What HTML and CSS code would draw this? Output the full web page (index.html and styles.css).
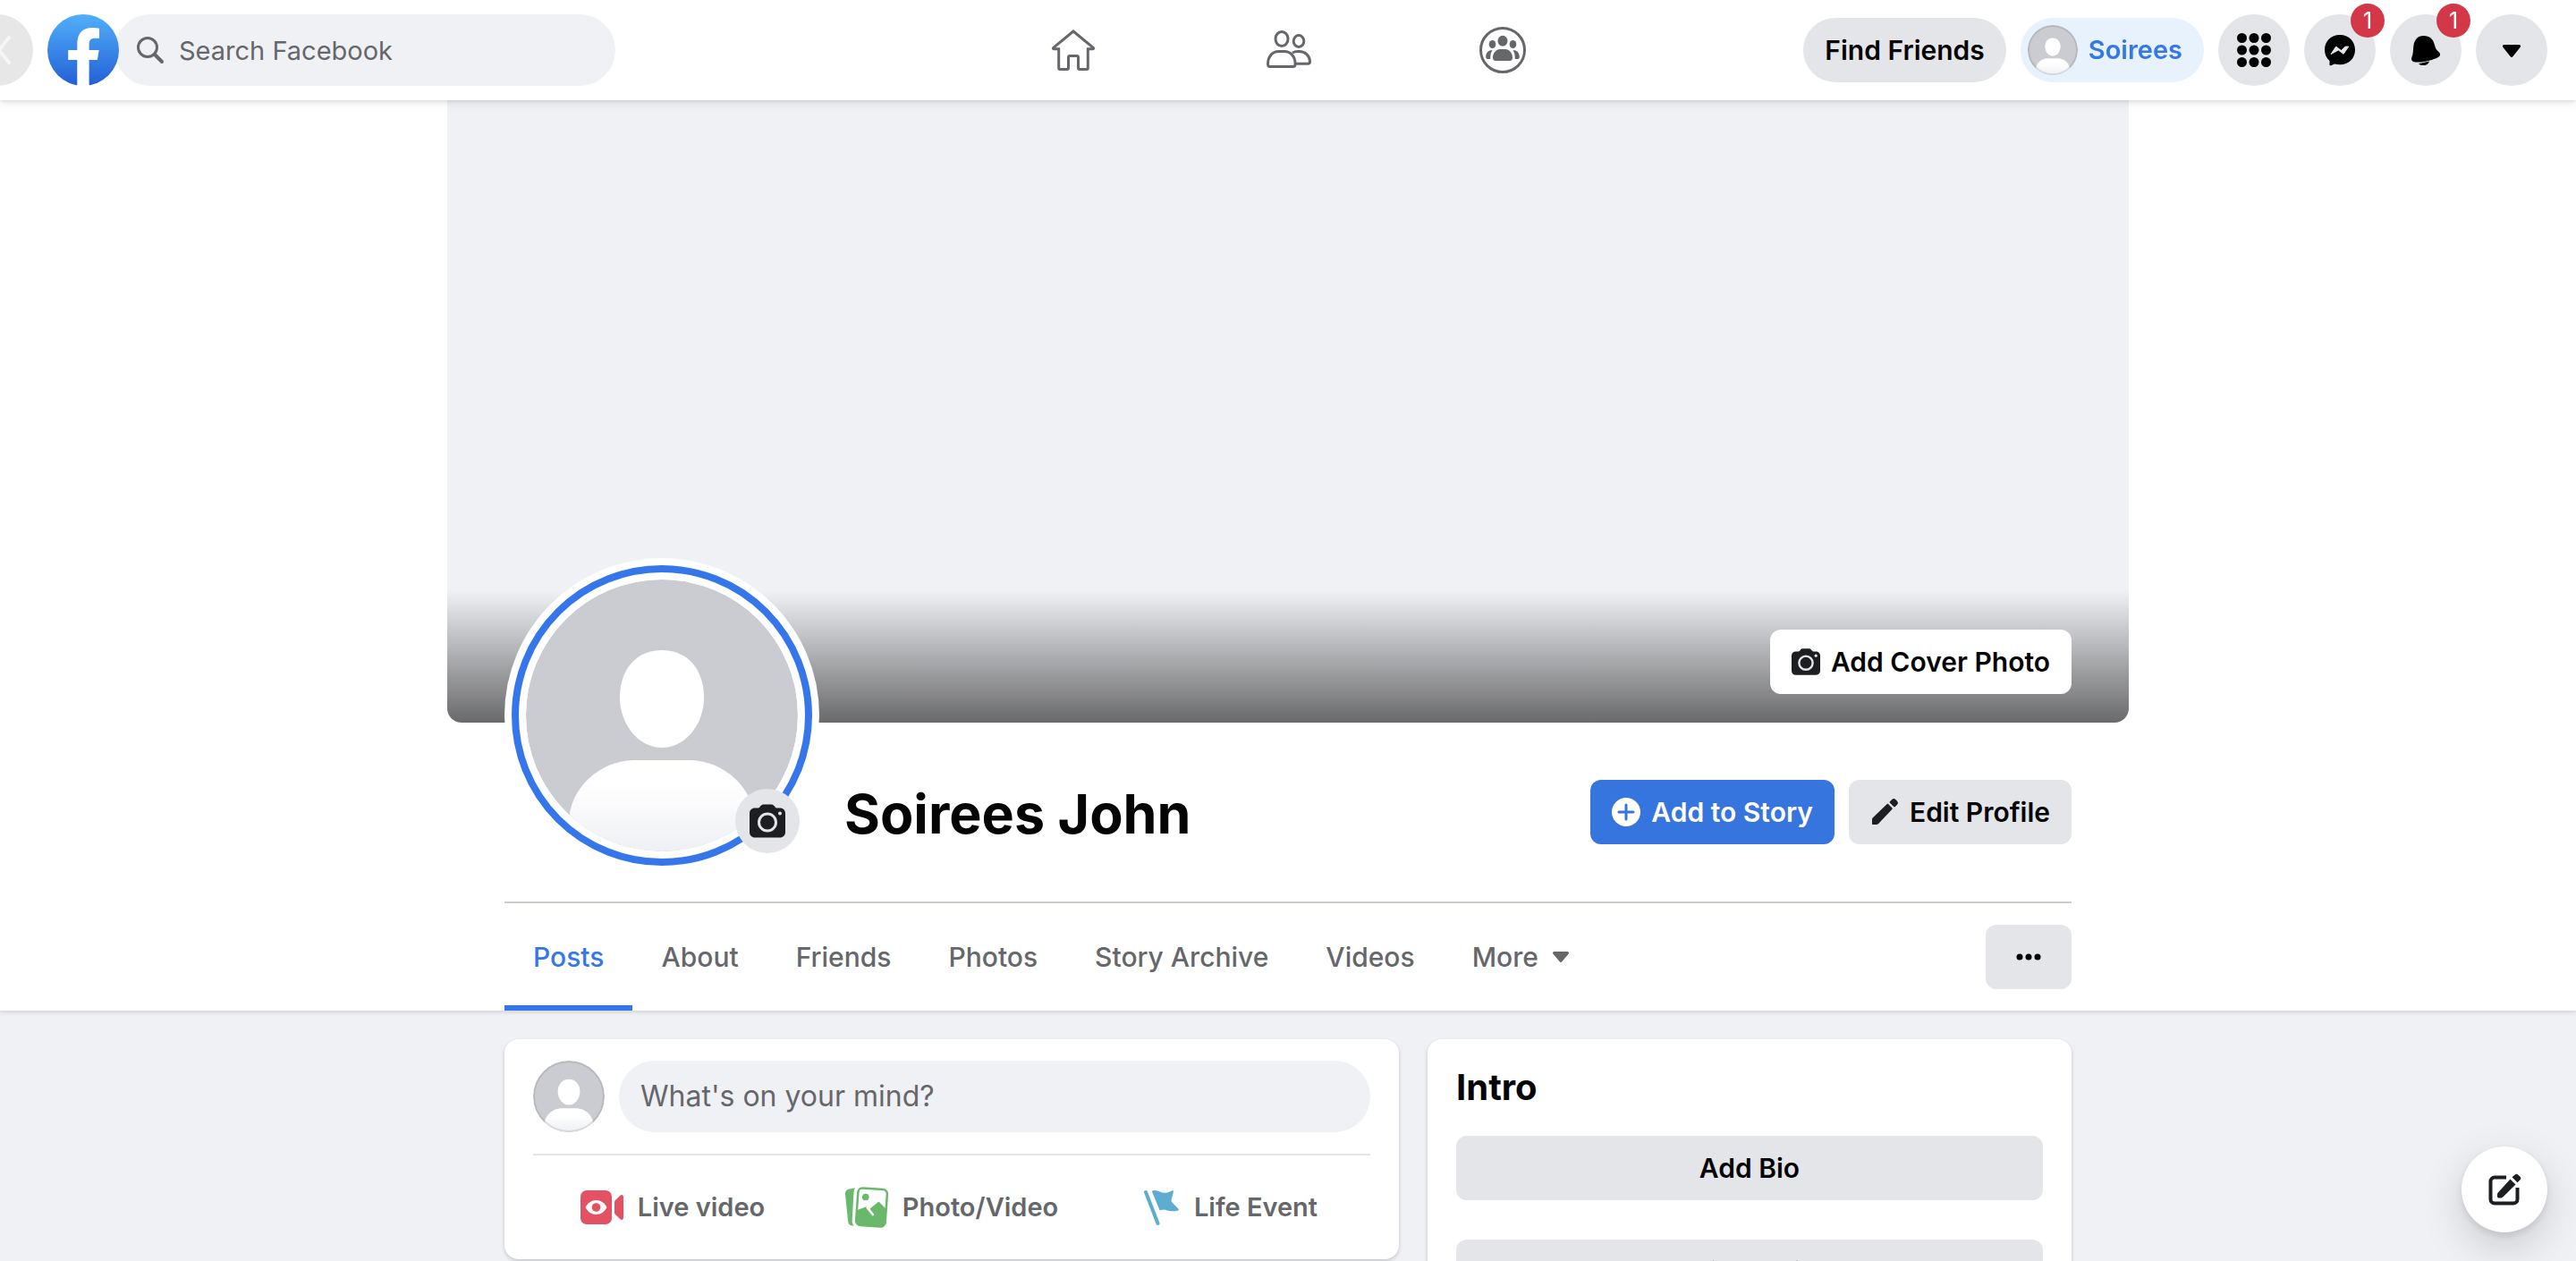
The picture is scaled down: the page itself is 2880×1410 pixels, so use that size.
FILE: index.html
```html
<!DOCTYPE html>
<html lang="en">
<head>
<meta charset="utf-8">
<meta name="viewport" content="width=device-width, initial-scale=1">
<title>Soirees John | Facebook</title>
<link rel="stylesheet" href="styles.css">
</head>
<body>
<svg class="sprite" aria-hidden="true">
  <defs>
    <linearGradient id="logo-fill" x1="0" y1="0" x2="0" y2="1">
      <stop offset="0" stop-color="#51affa"/><stop offset="1" stop-color="#235fd6"/>
    </linearGradient>
    <linearGradient id="body-fill" x1="0" y1="0" x2="0" y2="1">
      <stop offset="0.25" stop-color="#fff"/><stop offset="1" stop-color="#eff0f4"/>
    </linearGradient>
    <clipPath id="avatar-clip"><circle cx="152" cy="152" r="152"/></clipPath>
  </defs>
  <symbol id="avatar" viewBox="0 0 304 304">
    <g clip-path="url(#avatar-clip)">
      <rect width="304" height="304" fill="#cbccd1"/>
      <path fill="#fff" d="M152 79c29 0 47 22 47 53 0 29-20 56-47 56s-47-27-47-56c0-31 18-53 47-53z"/>
      <path fill="url(#body-fill)" d="M48 304v-32c0-38 34-70 74-70h60c40 0 74 32 74 70v32z"/>
    </g>
  </symbol>
  <symbol id="camera" viewBox="0 0 40 40">
    <path fill="#1c1e21" d="M6 5.500h3.500c1.500 0 2-1.500 3-2.500.8-.9 2-1.500 3.500-1.500h8c1.500 0 2.700.6 3.500 1.500 1 1 1.500 2.500 3 2.500H34c3.500 0 6 2.500 6 6v21c0 3.500-2.500 6-6 6H6c-3.500 0-6-2.500-6-6v-21c0-3.500 2.500-6 6-6z"/>
    <circle class="lens" cx="20" cy="21.500" r="9.500" fill="none" stroke-width="3"/>
    <circle class="lens-dot" cx="34" cy="11.500" r="2"/>
  </symbol>
</svg>

<div class="app">
  <header class="topbar">
    <div class="topbar-start">
      <button class="back" aria-label="Back"><svg width="80" height="80" viewBox="0 0 80 80"><path d="M53 26 42 40l11 14" fill="none" stroke="#f5f6f7" stroke-width="4" stroke-linecap="round"/></svg></button>
      <a class="logo" href="#" aria-label="Facebook">
        <svg width="80" height="80" viewBox="0 0 80 80"><circle cx="40" cy="40" r="40" fill="url(#logo-fill)"/><path fill="#fff" d="M33.300 80V51H23.200V40h10.100v-6.500C33.300 21 39.500 15 50 15c3 0 6 .3 8 .8v10.900h-4.500c-5.400 0-6.900 2.700-6.900 6.800V40h11.100l-1.900 11h-9.200v29z"/></svg>
      </a>
      <label class="search">
        <svg width="32" height="32" viewBox="0 0 32 32" fill="none" stroke="#65676b" stroke-width="3"><circle cx="13" cy="13" r="10.500"/><path d="m21 21 8 8" stroke-linecap="round" stroke-width="4"/></svg>
        <input type="search" placeholder="Search Facebook" aria-label="Search Facebook">
      </label>
    </div>
    <nav class="topbar-nav" aria-label="Main">
      <a href="#" aria-label="Home"><svg width="56" height="56" viewBox="0 0 56 56"><path d="M28 7 5.700 25.300c-.7.600-.4 1.400.5 1.400h5.500V48c0 .9.600 1.500 1.500 1.500H21c.9 0 1.500-.6 1.500-1.500V36c0-.9.600-1.500 1.500-1.500h8c.9 0 1.500.6 1.500 1.500v12c0 .9.600 1.500 1.500 1.500h7.800c.9 0 1.500-.6 1.500-1.500V26.700h5.500c.9 0 1.200-.8.5-1.400z"/></svg></a>
      <a href="#" aria-label="Friends"><svg width="56" height="56" viewBox="0 0 56 56"><ellipse cx="21" cy="15.500" rx="7" ry="8"/><ellipse cx="40" cy="18" rx="5.800" ry="6.500"/><path d="M8 46.500h25.500c1.700 0 2.600-1 2.600-3 0-8-5-14-12-14h-6.600c-7 0-12 6-12 14 0 2 .8 3 2.500 3zM33 31c1.700-1 3.700-1.500 6-1.500h1.500c7 0 12 5 12 11.500 0 1.500-1 2.300-2.500 2.300H36.500"/></svg></a>
      <a href="#" aria-label="Groups"><svg width="56" height="56" viewBox="0 0 56 56"><circle cx="28" cy="28" r="24.500"/><g fill="#65676b" stroke="none"><ellipse cx="28" cy="17.800" rx="5.500" ry="6"/><ellipse cx="16.500" cy="21.500" rx="3.800" ry="4.500"/><ellipse cx="39.500" cy="21.500" rx="3.800" ry="4.500"/><path d="M25 27h6c4.500 0 8 4.500 8 9.500 0 2.200-1 3.500-3 3.500H20c-2 0-3-1.300-3-3.500 0-5 3.500-9.500 8-9.500zM16.500 28c-1.700 2.700-2.500 6-2.200 10h-3.100c-1.400 0-2-.9-2-2.500 0-4.500 2.800-7.500 7.300-7.500zM39.500 28c1.700 2.700 2.500 6 2.200 10h3.100c1.400 0 2-.9 2-2.500 0-4.500-2.800-7.500-7.300-7.500z"/></g></svg></a>
    </nav>
    <div class="topbar-end">
      <button class="find">Find Friends</button>
      <a class="me" href="#"><svg class="avatar-ring" width="56" height="56"><use href="#avatar"/></svg>Soirees</a>
      <button class="round" aria-label="Menu"><svg width="40" height="40" viewBox="0 0 40 40"><g id="dots"><circle cx="6.500" cy="6.500" r="5.500"/><circle cx="20" cy="6.500" r="5.500"/><circle cx="33.500" cy="6.500" r="5.500"/></g><use href="#dots" y="13.500"/><use href="#dots" y="27"/></svg></button>
      <button class="round" aria-label="Messenger"><svg width="40" height="40" viewBox="0 0 40 40"><path d="M20 3C10 3 3 10.200 3 19.800c0 5 2 9.300 5.500 12.200v4.200c0 .9.800 1.400 1.600 1L14 35.500c2 .6 3.900.8 6 .8 10 0 17-7 17-16.500S30 3 20 3z"/><path d="m10 24.600 5.700-8.500 5.800 4.400 4.700-4.400h3.500l-5.600 8.200-5.700-4.300z" fill="#e4e5e9" stroke="#e4e5e9" stroke-linejoin="round"/></svg><span class="badge">1</span></button>
      <button class="round" aria-label="Notifications"><svg width="40" height="40" viewBox="0 0 40 40"><path d="M6 33c-2-1-2.500-3-1.500-5.500C6 24 5.800 21 6.300 16 7 8.500 11 4 17.500 4 24.500 4 28.500 8 30 14.500c.9 4 2.200 5.500 4.500 7.500 2.600 2.200 1.800 4.800-1 6.300-5.500 2.900-19 6.700-27.500 4.700zM12 35.200l12-2.700c-.5 2.300-2.800 4.500-5.800 4.500-2.800 0-5.200-.5-6.200-1.800z"/></svg><span class="badge">1</span></button>
      <button class="round" aria-label="Account"><svg width="40" height="40" viewBox="0 0 40 40"><path d="M12 14h16c2 0 2.700 1.500 1.500 3l-8 10c-.9 1.200-2.100 1.200-3 0l-8-10C9.300 15.500 10 14 12 14z"/></svg></button>
    </div>
  </header>

  <main>
    <section class="profile">
      <div class="cover">
        <button class="btn btn-white"><svg width="32" height="32"><use href="#camera"/></svg>Add Cover Photo</button>
      </div>
      <div class="wrap">
        <div class="identity">
          <div class="photo">
            <svg class="photo-img" viewBox="0 0 304 304" role="img" aria-label="Profile picture"><use href="#avatar"/></svg>
            <button class="photo-edit" aria-label="Update profile picture"><svg width="40" height="40"><use href="#camera"/></svg></button>
          </div>
          <h1>Soirees John</h1>
          <div class="actions">
            <button class="btn btn-blue"><svg width="32" height="32" viewBox="0 0 32 32"><circle cx="16" cy="16" r="16" fill="#fff"/><path d="M16 8v16M8 16h16" stroke="#3575dd" stroke-width="3" stroke-linecap="round"/></svg>Add to Story</button>
            <button class="btn"><svg width="32" height="32" viewBox="0 0 32 32" fill="#1c1e21"><path d="M2 29v-4.500c0-1.100.4-1.800 1.200-2.600L18.500 7.300c.6-.6 1.200-.6 1.800 0l4 4c.6.600.6 1.200 0 1.800L9.600 28.600C8.800 29.600 8 30 6.900 30H3c-.6 0-1-.4-1-1zM22 4.200l2-2c1.500-1.500 3-1.500 4.500 0l1.300 1.300c1.500 1.500 1.500 3 0 4.500l-2 2c-.6.6-1 .6-1.600 0l-4.200-4.200c-.6-.6-.6-1 0-1.600z"/></svg>Edit Profile</button>
          </div>
        </div>
        <nav class="tabs" aria-label="Profile">
          <a class="current" href="#" aria-current="page">Posts</a>
          <a href="#">About</a>
          <a href="#">Friends</a>
          <a href="#">Photos</a>
          <a href="#">Story Archive</a>
          <a href="#">Videos</a>
          <a href="#">More<svg width="18" height="12" viewBox="0 0 18 12"><path d="M2 0h14c2 0 2.500 1.500 1.500 2.700l-7 8.300c-1 1.300-2 1.300-3 0l-7-8.300C-.5 1.500 0 0 2 0z" fill="#65676b"/></svg></a>
          <button class="btn more" aria-label="More options"><svg width="28" height="8" viewBox="0 0 28 8"><circle cx="4" cy="4" r="3.500"/><circle cx="14" cy="4" r="3.500"/><circle cx="24" cy="4" r="3.500"/></svg></button>
        </nav>
      </div>
    </section>

    <div class="wrap columns">
      <section class="card composer">
        <div class="composer-top">
          <svg class="avatar-ring" width="80" height="80"><use href="#avatar"/></svg>
          <button class="prompt">What's on your mind?</button>
        </div>
        <div class="composer-actions">
          <button><svg width="48" height="48" viewBox="0 0 48 48" fill="#e25263"><rect y="5" width="35" height="38" rx="7"/><path d="M38 18.500c0-1.400.5-2.200 1.500-3l4.700-4.600c1.700-1.600 3.800-.9 3.800 1.500v23.200c0 2.400-2.100 3.100-3.800 1.500l-4.700-4.600c-1-.8-1.500-1.600-1.500-3z"/><path fill="#fff" d="M5.500 24c2.500-5 7-8 12-8s9.500 3 12 8c-2.500 5-7 8-12 8s-9.500-3-12-8z"/><circle cx="17.500" cy="24" r="4.800"/></svg>Live video</button>
          <button><svg width="48" height="48" viewBox="0 0 48 48" fill="#69b86c"><path d="M5 3.500 11 2.300C9.500 5 9.500 7 9.300 10L7.800 37c-.2 3.500 0 5.500 1.900 7.500-3.500.5-6.200-1-6.500-4.500L0 9.500C-.3 6 1.500 4 5 3.500z"/><g transform="rotate(4 29.500 24)"><rect x="13.200" y="3.200" width="32.600" height="41.600" rx="5" fill="#fff" stroke="#69b86c" stroke-width="2.500"/><path d="M13.200 28.500 24 23.500l7 8-3.500-5.500 9.500-9 9 8v14.800c0 3-2 5-5 5H18.200c-3 0-5-2-5-5z"/><path d="m24.500 24.500 7 7.500" stroke="#fff" stroke-width="2.500" stroke-linecap="round"/><circle cx="22" cy="13" r="3.800"/></g></svg>Photo/Video</button>
          <button><svg width="40" height="48" viewBox="0 0 40 48"><path d="M2 7l13.500 35" stroke="#5dadd1" stroke-width="4" stroke-linecap="round"/><path fill="#5dadd1" d="M10.500 5.200c4.500-1.200 8 2.600 13 2.600 3.500 0 5.500-1.300 7.500-2.300 1.500-.7 2.300 0 1.900 1.400L30.500 16c-.2.800 0 1.300.5 1.900l7.300 7.700c1 1.100.5 2-.8 2.200-5 1-8.500.6-12-.6-2.500-.9-4.800-1.200-7 .1-.6.300-1 .1-1.200-.5L9.200 7c-.4-1-.2-1.500 1.300-1.800z"/></svg>Life Event</button>
        </div>
      </section>
      <aside class="card intro">
        <h2>Intro</h2>
        <button class="btn">Add Bio</button>
        <button class="btn">Edit Details</button>
      </aside>
    </div>
  </main>
  <button class="compose" aria-label="New message"><svg width="40" height="40" viewBox="0 0 40 40" fill="#1c1e21"><path d="M22 6.500H9c-2.500 0-4.500 2-4.500 4.500v20c0 2.500 2 4.500 4.500 4.500h21c2.500 0 4.500-2 4.500-4.500V18" fill="none" stroke="#1c1e21" stroke-width="4"/><path d="m26.500 8.500 6 6-14 13.700c-.9.900-1.700 1.300-3 1.300h-1.700c-1.200 0-1.800-.6-1.800-1.800V26c0-1.300.4-2.100 1.300-3zM31.500 3.700c1.400-1.300 2.500-1.300 3.900 0l1.900 1.900c1.400 1.400 1.400 2.500 0 3.900l-2.800 2.800-6-6z"/></svg></button>
</div>
</body>
</html>
```
FILE: styles.css
```css
:root {
  --page: #f0f1f5;
  --button: #e4e5e9;
  --blue: #3577eb;
  --text: #050505;
  --muted: #65676b;
}

* { box-sizing: border-box; }

body {
  margin: 0;
  background: var(--page);
  color: var(--text);
  font: 400 30px/40px Inter, "Liberation Sans", sans-serif;
}

svg { display: block; flex: none; }
a { color: inherit; text-decoration: none; }
button, input { font: inherit; color: inherit; border: 0; padding: 0; margin: 0; background: none; }
button { cursor: pointer; }
h1, h2 { margin: 0; }

.sprite { position: absolute; width: 0; height: 0; }

.app { height: 100vh; overflow: hidden auto; scrollbar-width: none; }

/* Top bar */
.topbar {
  position: sticky;
  top: 0;
  z-index: 2;
  display: grid;
  grid-template-columns: 1fr auto 1fr;
  align-items: center;
  height: 112px;
  background: #fff;
  box-shadow: 0 2px 4px rgba(0, 0, 0, .1), 0 4px 12px rgba(0, 0, 0, .06);
}
.topbar-start { display: flex; align-items: center; }
.back { width: 80px; height: 80px; margin-left: -43px; border-radius: 50%; background: #e7e7e7; }
.logo { margin-left: 16px; z-index: 1; }
.search {
  display: flex;
  align-items: center;
  gap: 16px;
  width: 560px;
  height: 80px;
  margin-left: -5px;
  padding: 0 24px;
  border-radius: 40px;
  background: var(--page);
}
.search input { flex: 1; min-width: 0; height: 80px; outline: 0; font-size: 29px; }
.search input::placeholder { color: var(--muted); opacity: 1; }

.topbar-nav { display: flex; }
.topbar-nav a { display: grid; place-items: center; width: 240px; height: 112px; }
.topbar-nav svg { fill: none; stroke: var(--muted); stroke-width: 3; }

.topbar-end { display: flex; justify-content: flex-end; align-items: center; gap: 16px; padding-right: 32px; font-weight: 600; }
.find { height: 72px; padding: 0 24px; border-radius: 36px; background: var(--button); }
.me { display: flex; align-items: center; gap: 12px; height: 72px; padding: 0 24px 0 8px; border-radius: 36px; background: #e7f2fd; color: var(--blue); font-size: 29px; }
.avatar-ring { border-radius: 50%; outline: 2px solid rgba(0, 0, 0, .1); outline-offset: -2px; }
.round { position: relative; display: grid; place-items: center; width: 80px; height: 80px; border-radius: 50%; background: var(--button); }
.badge {
  position: absolute;
  top: -12px;
  right: -10px;
  width: 38px;
  height: 38px;
  border-radius: 50%;
  background: #d23847;
  color: #fff;
  font: 400 26px/38px Inter, sans-serif;
  text-align: center;
}

/* Buttons */
.btn {
  display: flex;
  align-items: center;
  justify-content: center;
  gap: 12px;
  height: 72px;
  padding: 0 24px;
  border-radius: 12px;
  background: var(--button);
  font-weight: 600;
  white-space: nowrap;
}
.btn-white { background: #fff; }
.btn-blue { background: #3575dd; color: #fff; }

/* Profile header */
.profile { background: #fff; box-shadow: 0 2px 4px rgba(0, 0, 0, .12); }
.cover {
  display: flex;
  justify-content: flex-end;
  align-items: flex-end;
  width: 100%;
  max-width: 1880px;
  height: 696px;
  margin: 0 auto;
  padding: 32px 64px;
  border-radius: 0 0 16px 16px;
  background: linear-gradient(to top, rgba(0, 0, 0, .56), transparent 148px) var(--page);
}
.wrap { width: 100%; max-width: 1752px; margin: 0 auto; }
.identity {
  display: flex;
  align-items: flex-start;
  height: 202px;
  border-bottom: 2px solid #cbccd2;
}
.photo {
  position: relative;
  width: 352px;
  height: 352px;
  margin-top: -184px;
  padding: 8px;
  border-radius: 50%;
  background: #fff;
}
.photo-img { width: 336px; height: 336px; padding: 8px; border: 8px solid var(--blue); border-radius: 50%; }
.photo-edit {
  position: absolute;
  right: 22px;
  bottom: 22px;
  display: grid;
  place-items: center;
  width: 72px;
  height: 72px;
  border-radius: 50%;
  background: var(--button);
}
.lens { stroke: #e4e5e9; }
.lens-dot { fill: #e4e5e9; }
h1 { flex: 1; margin: 64px 0 0 28px; font-size: 61px; line-height: 76px; font-weight: 700; }
.actions { display: flex; gap: 16px; margin-top: 64px; }

.tabs { display: flex; align-items: center; height: 120px; color: var(--muted); font-weight: 500; }
.tabs a { display: flex; align-items: center; gap: 16px; height: 120px; padding: 0 32px; border: solid transparent; border-width: 6px 0; }
.tabs .current { color: var(--blue); border-bottom-color: var(--blue); }
.more { width: 96px; margin-left: auto; }

/* Content */
.columns { display: grid; grid-template-columns: 1000fr 720fr; gap: 32px; align-items: start; padding: 32px 0; }
.card { border-radius: 16px; background: #fff; box-shadow: 0 2px 4px rgba(0, 0, 0, .18); }
.composer { padding: 24px 32px 16px; }
.composer-top { display: flex; gap: 16px; padding-bottom: 24px; border-bottom: 2px solid var(--button); }
.prompt { flex: 1; height: 80px; padding: 0 24px; border-radius: 40px; background: var(--page); color: var(--muted); font-size: 32px; text-align: left; }
.composer-actions { display: grid; grid-template-columns: repeat(3, 1fr); padding-top: 16px; }
.composer-actions button { display: flex; align-items: center; justify-content: center; gap: 16px; height: 84px; color: var(--muted); font-weight: 600; font-size: 29px; }
.intro { display: grid; gap: 44px; padding: 32px; }
h2 { margin-bottom: -12px; font-size: 40px; line-height: 44px; font-weight: 700; }

.compose {
  position: fixed;
  right: 32px;
  bottom: 32px;
  display: grid;
  place-items: center;
  width: 96px;
  height: 96px;
  border-radius: 50%;
  background: #fff;
  box-shadow: 0 4px 8px rgba(0, 0, 0, .1), 0 16px 48px rgba(0, 0, 0, .16);
}
```
